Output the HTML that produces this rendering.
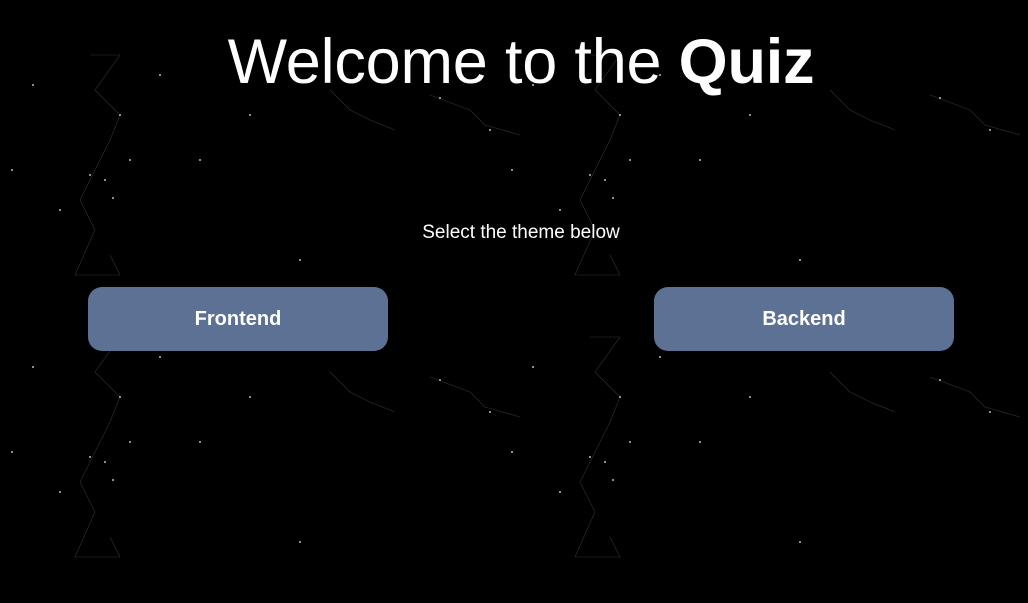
<!DOCTYPE html>
<html><head><meta charset="utf-8"><style>
html,body{margin:0;padding:0;width:1028px;height:603px;background:#000;overflow:hidden;font-family:"Liberation Sans",sans-serif;color:#fff;position:relative}
svg.bg{position:absolute;left:0;top:0}
h1{position:absolute;left:0;width:1042px;top:27px;margin:0;text-align:center;font-weight:normal;font-size:63px;line-height:70px;letter-spacing:-0.2px}
h1 b{font-weight:bold}
.sub{position:absolute;left:0;width:1042px;top:222px;text-align:center;font-size:19px}
.btn{position:absolute;top:287px;width:300px;height:64px;border-radius:14px;background:#5c7194;font-weight:bold;font-size:20px;text-align:center;line-height:64px}
</style></head><body>
<svg class="bg" width="1028" height="603" stroke="#333" stroke-width="0.6" fill="none">
<g id="t">
<path d="M90 55 L120 55 L95 90 L120 115 L110 140 L95 170 L80 200 L95 230 L75 275 L120 275 L110 255"/>
<path d="M330 90 L350 110 L370 120 L395 130 M430 95 L470 110 L485 125 L520 135"/>
<g fill="#bbb" stroke="none">
<circle cx="120" cy="115" r="1"/><circle cx="105" cy="180" r="1"/><circle cx="90" cy="175" r="1"/><circle cx="113" cy="198" r="1"/><circle cx="130" cy="160" r="1"/><circle cx="200" cy="160" r="1"/><circle cx="160" cy="75" r="1"/><circle cx="33" cy="85" r="1"/><circle cx="12" cy="170" r="1"/><circle cx="250" cy="115" r="1"/><circle cx="490" cy="130" r="1"/><circle cx="440" cy="98" r="1"/><circle cx="300" cy="260" r="1"/><circle cx="60" cy="210" r="1"/>
</g>
</g>
<use href="#t" x="500" y="0"/><use href="#t" x="0" y="282"/><use href="#t" x="500" y="282"/>
</svg>
<h1>Welcome to the <b>Quiz</b></h1>
<div class="sub">Select the theme below</div>
<div class="btn" style="left:88px">Frontend</div>
<div class="btn" style="left:654px">Backend</div>
</body></html>
